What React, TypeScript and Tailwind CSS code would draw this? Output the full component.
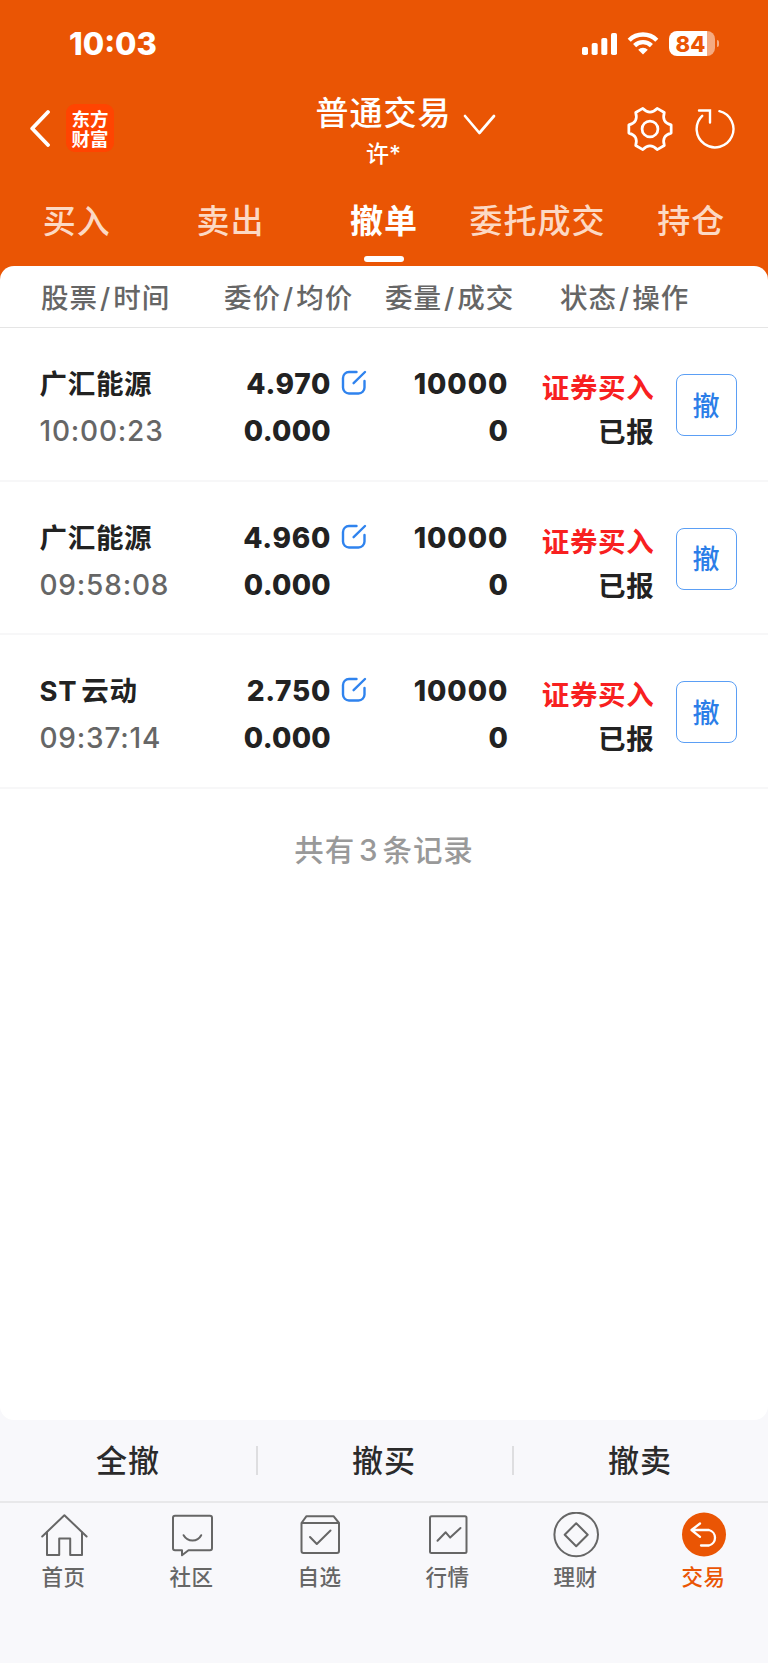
import type { ReactNode } from "react";
import clsx from "clsx";

type Order = {
	prefix?: string;
	name: string;
	time: string;
	price: string;
	avgPrice: string;
	amount: string;
	filled: string;
	side: string;
	status: string;
};

const TABS = ["买入", "卖出", "撤单", "委托成交", "持仓"];

const ORDERS: Order[] = [
	{ name: "广汇能源", time: "10:00:23", price: "4.970", avgPrice: "0.000", amount: "10000", filled: "0", side: "证券买入", status: "已报" },
	{ name: "广汇能源", time: "09:58:08", price: "4.960", avgPrice: "0.000", amount: "10000", filled: "0", side: "证券买入", status: "已报" },
	{ prefix: "ST", name: "云动", time: "09:37:14", price: "2.750", avgPrice: "0.000", amount: "10000", filled: "0", side: "证券买入", status: "已报" },
];

const ACTIONS = ["全撤", "撤买", "撤卖"];

function StatusBar() {
	return (
		<div className="flex h-[87px] items-center justify-between pl-[69px] pr-[49px]">
			<span className="text-[31px] leading-none font-extrabold">10:03</span>
			<div className="flex items-center">
				<svg className="h-[22px] w-9" viewBox="0 0 36 22" fill="currentColor">
					<rect x="0" y="14" width="6" height="8" rx="1.8" />
					<rect x="9.7" y="10" width="6" height="12" rx="1.8" />
					<rect x="19.3" y="5" width="6" height="17" rx="1.8" />
					<rect x="29" y="0" width="6" height="22" rx="1.8" />
				</svg>
				<svg className="ml-[9px] h-[23px] w-[32px]" viewBox="0 0 32 23" fill="none" stroke="currentColor" strokeWidth="4.4">
					<path d="M2.2 8.2a19.6 19.6 0 0 1 27.6 0" />
					<path d="M7.6 13.6a12 12 0 0 1 16.8 0" />
					<path d="M16 22.6l-4.8-4.8a6.8 6.8 0 0 1 9.6 0z" fill="currentColor" stroke="none" />
				</svg>
				<div className="ml-[10px] flex items-center">
					<div className="flex h-[25px] w-[46px] items-center justify-center rounded-[8px] bg-linear-to-r from-white from-83% to-white/50 to-83% pr-0.5">
						<span className="text-[22px] leading-none font-extrabold text-[#ea5504]">84</span>
					</div>
					<div className="ml-0.5 h-[7px] w-[2.5px] rounded-r-full bg-white/50" />
				</div>
			</div>
		</div>
	);
}

function TitleBar() {
	return (
		<div className="flex h-[85px] items-start justify-between pt-px pr-[33px] pl-[30px]">
			<div className="flex w-[180px] items-center pt-4">
				<svg className="h-[38px] w-5" viewBox="0 0 20 38" fill="none" stroke="currentColor" strokeWidth="3.8" strokeLinecap="round" strokeLinejoin="round">
					<path d="M18 3L2.2 19.5 18 36" />
				</svg>
				<div className="ml-4 flex h-12 w-12 flex-col items-center justify-center rounded-[9px] bg-[#ff4401] pt-px text-[18.5px] leading-[20px] font-bold">
					<span>东方</span>
					<span>财富</span>
				</div>
			</div>
			<div className="flex pt-px pl-[46px] whitespace-nowrap">
				<div className="flex flex-col items-center">
					<span className="text-[33px] leading-[48px] font-medium tracking-[1px]">普通交易</span>
					<span className="text-[23px] leading-[35px] font-medium">许*</span>
				</div>
				<svg className="mt-[24px] ml-[11px] h-[22px] w-[33px]" viewBox="0 0 33 22" fill="none" stroke="currentColor" strokeWidth="2.7" strokeLinecap="round" strokeLinejoin="round">
					<path d="M2 3l14.4 17L31 3" />
				</svg>
			</div>
			<div className="flex w-[180px] items-center justify-end gap-[21px] pt-[17px]">
				<svg className="h-12 w-12" viewBox="-24.5 -24.5 49 49" fill="none" stroke="currentColor" strokeWidth="2.8" strokeLinejoin="round">
					<path d="M21.6 4.2Q11.6 6.7 14.6 16.8L7.3 21Q0 13.6 -7.3 21L-14.6 16.8Q-11.6 6.7 -21.6 4.2L-21.6 -4.2Q-11.6 -6.7 -14.6 -16.8L-7.3 -21Q0 -13.6 7.3 -21L14.6 -16.8Q11.6 -6.7 21.6 -4.2Z" />
					<circle r="8.1" />
				</svg>
				<svg className="h-[42px] w-10" viewBox="-20 -21 40 42" fill="none" stroke="currentColor" strokeWidth="2.4" strokeLinecap="round">
					<path d="M4.4 -17.9A18.4 18.4 0 1 1 -12.8 -13.2" />
					<path d="M-16 -18.5h11v12" />
				</svg>
			</div>
		</div>
	);
}

function Tabs() {
	return (
		<div className="grid h-[94px] grid-cols-5 pt-[21px]">
			{TABS.map((tab) => {
				const active = tab === "撤单";
				return (
					<div key={tab} className="flex flex-col items-center whitespace-nowrap">
						<span className={clsx("text-[33px] leading-[56px] tracking-[1px]", active ? "font-bold" : "font-medium text-[#fcd9c4]")}>{tab}</span>
						{active && <div className="mt-[7px] h-[6px] w-10 rounded-full bg-white" />}
					</div>
				);
			})}
		</div>
	);
}

function Slash() {
	return <span className="mx-[2px]">/</span>;
}

function ColumnHeads() {
	return (
		<div className="flex h-[62px] items-center border-b border-[#e5e5e5] pt-1 pl-[41px] text-[27.5px] font-medium tracking-[1px] text-[#666]">
			<span className="w-[183px]">股票<Slash />时间</span>
			<span className="w-[161px]">委价<Slash />均价</span>
			<span className="w-[175px]">委量<Slash />成交</span>
			<span>状态<Slash />操作</span>
		</div>
	);
}

function EditIcon() {
	return (
		<svg className="h-[26px] w-[26px]" viewBox="0 0 26 26" fill="none" stroke="#2f83ee" strokeWidth="2.4" strokeLinecap="round">
			<path d="M15.5 2H8a6 6 0 0 0-6 6v9.5a6 6 0 0 0 6 6h9.5a6 6 0 0 0 6-6V11" />
			<path d="M12.6 13.2L24 2" />
		</svg>
	);
}

function OrderRow({ order }: { order: Order }) {
	return (
		<div className="flex h-[153.5px] border-b-2 border-[#f7f7f8] pt-[33px] text-[28px] leading-[47px] font-extrabold tracking-[0.7px] text-[#222]">
			<div className="w-[180px] pl-[39.5px]">
				<div className="text-[27.5px] font-bold whitespace-nowrap">
					{order.prefix && <span className="mr-1">{order.prefix}</span>}
					{order.name}
				</div>
				<div className="font-medium tracking-[0.8px] text-[#666]">{order.time}</div>
			</div>
			<div className="w-[151px] text-right">
				<div>{order.price}</div>
				<div className="tracking-[0.3px]">{order.avgPrice}</div>
			</div>
			<div className="w-[37px] pt-[9px] pl-[10px]">
				<EditIcon />
			</div>
			<div className="w-[140.5px] text-right">
				<div className="tracking-[1px]">{order.amount}</div>
				<div>{order.filled}</div>
			</div>
			<div className="w-[146px] pt-[5px] text-right text-[27.5px] leading-[44px] font-bold">
				<div className="text-[#f82020]">{order.side}</div>
				<div>{order.status}</div>
			</div>
			<button className="mt-[13px] ml-[21px] h-[62px] w-[61px] rounded-[8px] border-[1.5px] border-[#5b9ff5] pt-0.5 text-[27px] leading-none font-medium tracking-normal text-[#2b7ee8]">
				撤
			</button>
		</div>
	);
}

function NavItem({ label, active, children }: { label: string; active?: boolean; children: ReactNode }) {
	return (
		<div className={clsx("flex flex-col items-center pt-[9px] pr-px", active ? "text-[#ea5504]" : "text-[#666]")}>
			<svg className="h-12 w-12" viewBox="0 0 48 48" fill="none" stroke="currentColor" strokeWidth="2" strokeLinecap="round" strokeLinejoin="round">
				{children}
			</svg>
			<span className="text-[21.5px] leading-[34px] font-medium tracking-[0.5px]">{label}</span>
		</div>
	);
}

function BottomNav() {
	return (
		<div className="grid h-[162px] grid-cols-6 border-t-2 border-[#e8e8ea]">
			<NavItem label="首页">
				<path d="M2.2 24.5L24.4 3.2 46.6 24.5" />
				<path d="M7 20.5V43h12.2V26.4h11V43H42V20.5" />
			</NavItem>
			<NavItem label="社区">
				<path d="M7 3.8h35a2 2 0 0 1 2 2v30.5a2 2 0 0 1-2 2H20.5L14 43.3v-5H7a2 2 0 0 1-2-2V5.8a2 2 0 0 1 2-2z" />
				<path d="M15.6 23.2c4 7 14 7 17.6 0" />
			</NavItem>
			<NavItem label="自选">
				<path d="M5.5 11L10.5 4.2h27L43 11v28a2 2 0 0 1-2 2H7.5a2 2 0 0 1-2-2zM5.5 11H43" />
				<path d="M14 25l6.8 7L34.5 18.5" />
			</NavItem>
			<NavItem label="行情">
				<rect x="6" y="4.2" width="36.5" height="36.8" rx="1.5" />
				<path d="M13.5 28.8l8.2-8.5 4.5 5.3L36.5 16" />
			</NavItem>
			<NavItem label="理财">
				<circle cx="24.2" cy="22.5" r="21.8" />
				<path d="M24.2 11.2l11.5 11.5-11.5 11.5-11.5-11.5z" />
			</NavItem>
			<NavItem label="交易" active>
				<circle cx="24" cy="22.5" r="22" fill="currentColor" stroke="none" />
				<path d="M20 11.5L11.500 18l8.500 6.800M12 18h17a8 8 0 0 1 0 15.500h-8" stroke="white" strokeWidth="2.3" />
			</NavItem>
		</div>
	);
}

export default function App() {
	return (
		<div className="flex h-[1663px] w-[768px] flex-col overflow-hidden bg-[#f8f8fb] font-[Inter,'Noto_Sans_CJK_SC',sans-serif]">
			<header className="h-[286px] shrink-0 bg-[#ea5504] text-white">
				<StatusBar />
				<TitleBar />
				<Tabs />
			</header>

			<main className="-mt-5 h-[1154px] shrink-0 rounded-[14px] bg-white">
				<ColumnHeads />
				{ORDERS.map((order) => (
					<OrderRow key={order.time} order={order} />
				))}
				<p className="pt-[38px] text-center text-[29.5px] leading-[46px] font-medium tracking-[0.9px] text-[#999]">
					共有<span className="mx-1">3</span>条记录
				</p>
			</main>

			<div className="flex h-[81px] shrink-0 items-center">
				{ACTIONS.map((action, i) => (
					<div key={action} className="relative flex-1 text-center text-[31px] leading-[46px] font-medium tracking-[1px] text-[#2b2b2b]">
						{action}
						{i < 2 && <span className="absolute top-2 -right-0.5 h-[29px] w-0.5 bg-[#dedee0]" />}
					</div>
				))}
			</div>
			<BottomNav />
		</div>
	);
}
